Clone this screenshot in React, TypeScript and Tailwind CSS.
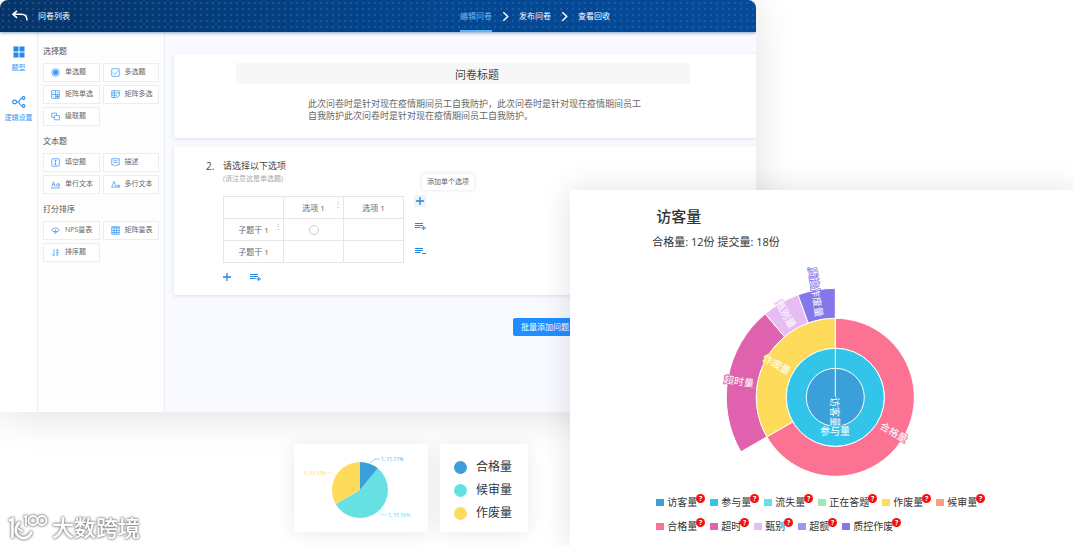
import { ReactNode } from "react";

const questionGroups = [
  {
    title: "选择题",
    items: [
      { icon: "radio", label: "单选题" },
      { icon: "check", label: "多选题" },
      { icon: "matrixRadio", label: "矩阵单选" },
      { icon: "matrixCheck", label: "矩阵多选" },
      { icon: "cascade", label: "级联题" },
    ],
  },
  {
    title: "文本题",
    items: [
      { icon: "blank", label: "填空题" },
      { icon: "describe", label: "描述" },
      { icon: "singleLine", label: "单行文本" },
      { icon: "multiLine", label: "多行文本" },
    ],
  },
  {
    title: "打分排序",
    items: [
      { icon: "nps", label: "NPS量表" },
      { icon: "matrixScale", label: "矩阵量表" },
      { icon: "sort", label: "排序题" },
    ],
  },
];

const legendRows = [
  [
    { label: "访客量", color: "#3ba0d9" },
    { label: "参与量", color: "#32c5e9" },
    { label: "流失量", color: "#67e0e3" },
    { label: "正在答题", color: "#9fe6b8" },
    { label: "作废量", color: "#ffdb5c" },
    { label: "候审量", color: "#ff9f7f" },
  ],
  [
    { label: "合格量", color: "#fb7293" },
    { label: "超时", color: "#e062ae" },
    { label: "甄别", color: "#e7bcf3" },
    { label: "超额", color: "#9d96f5" },
    { label: "质控作废", color: "#8378ea" },
  ],
];

const pieLegend = [
  { label: "合格量", color: "#3ba0d9" },
  { label: "候审量", color: "#67e0e3" },
  { label: "作废量", color: "#ffdb5c" },
];

const sunburst = [
  { color: "#e062ae", inner: 79, outer: 109, from: 240, to: 320 },
  { color: "#e7bcf3", inner: 79, outer: 109, from: 320, to: 340 },
  { color: "#8378ea", inner: 79, outer: 109, from: 340, to: 360 },
  { color: "#fb7293", inner: 49, outer: 79, from: 0, to: 240 },
  { color: "#ffdb5c", inner: 49, outer: 79, from: 240, to: 360 },
];

const sunburstLabels = [
  { text: "超时量", x: 39, y: 126, rotate: 8, color: "#e062ae" },
  { text: "甄别量", x: 86, y: 59, rotate: 60, color: "#e7bcf3" },
  { text: "质控作废量", x: 116, y: 37, rotate: 82, color: "#8378ea" },
  { text: "作废量", x: 77, y: 109, rotate: 30, color: "#ffdb5c" },
  { text: "合格量", x: 194, y: 177, rotate: 30, color: "#fb7293" },
  { text: "访客量", x: 135, y: 157, rotate: 90, color: "#3ba0d9" },
  { text: "参与量", x: 135, y: 176, rotate: 0, color: "#32c5e9" },
];

// angles run clockwise from twelve o'clock
function point(cx: number, cy: number, r: number, deg: number) {
  const a = (deg * Math.PI) / 180;
  return `${cx + r * Math.sin(a)} ${cy - r * Math.cos(a)}`;
}

function sector(
  cx: number,
  cy: number,
  inner: number,
  outer: number,
  from: number,
  to: number
) {
  const large = to - from > 180 ? 1 : 0;
  return `M${point(cx, cy, outer, from)}A${outer} ${outer} 0 ${large} 1 ${point(cx, cy, outer, to)}L${point(cx, cy, inner, to)}A${inner} ${inner} 0 ${large} 0 ${point(cx, cy, inner, from)}Z`;
}

const iconShapes: Record<string, ReactNode> = {
  radio: (
    <>
      <circle cx="6" cy="6" r="5" />
      <circle cx="6" cy="6" r="3" fill="currentColor" />
    </>
  ),
  check: (
    <>
      <rect x="1" y="1" width="10" height="10" rx="0.5" />
      <path d="M3 6l2.2 2.4L9.6 3.4" />
    </>
  ),
  matrixRadio: (
    <>
      <rect x="1" y="1" width="10" height="10" />
      <path d="M1 6h10M6 1v10M3 3.5h1M8 3.5h1.4M3 8.5h1" />
      <circle cx="8.6" cy="8.6" r="1.2" fill="currentColor" />
    </>
  ),
  matrixCheck: (
    <>
      <path d="M1 1h10v7M1 1v9h6M1 4h10M1 7h7M4.5 1v9" />
      <path d="M7 8.6l1.4 1.4L11 7.6" />
    </>
  ),
  cascade: (
    <>
      <path d="M4 7H1V1.5h6.5V4" />
      <rect x="4.5" y="4.8" width="6.8" height="5.6" rx="0.5" />
    </>
  ),
  blank: (
    <>
      <rect x="1" y="1" width="10" height="10" rx="1" />
      <path d="M4.5 3.2h3M6 3.2v5.6M4.5 8.8h3" />
    </>
  ),
  describe: (
    <>
      <path d="M1 1h10v8H8L6 11 4 9H1z" />
      <path d="M3.4 3.6h5.2M3.4 6h5.2" />
    </>
  ),
  singleLine: (
    <path d="M0 10.5h12M1 8.5l2.4-6 2.4 6M1.8 6.4h3.2M11 4.6v4M11 6.6a1.8 1.8 0 1 0-3.6 0a1.8 1.8 0 1 0 3.6 0" />
  ),
  multiLine: (
    <path d="M0.8 9.5L4 2l3.2 7.5zM11 6.5v3.5M11 8.3a1.5 1.5 0 1 0-3 0a1.5 1.5 0 1 0 3 0" />
  ),
  nps: (
    <>
      <path d="M1 5.6C2 1.8 10 1.8 11 5.6L9 7.4H3z" />
      <path d="M4.5 7.4L6 10.2 7.5 7.4M6 7V4.8" />
    </>
  ),
  matrixScale: (
    <path d="M1 1h10v10H1zM1 2.600h10M1 6h10M1 8.6h10M4.3 1v10M7.7 1v10" />
  ),
  sort: <path d="M4 1.5v9L1.5 8M8 10.5v-9L10.5 4M8 6h2.5M8 9h2" />,
};

function TypeIcon({ name }: { name: string }) {
  return (
    <svg
      viewBox="0 0 12 12"
      className="size-[9px] shrink-0 text-[#3d97f2]"
      fill="none"
      stroke="currentColor"
      strokeWidth="1"
      aria-hidden="true"
    >
      {iconShapes[name]}
    </svg>
  );
}

function PlusIcon() {
  return (
    <svg viewBox="0 0 12 12" className="size-3" aria-hidden="true">
      <path d="M6 2v8M2 6h8" stroke="#2185e0" strokeWidth="1.3" />
    </svg>
  );
}

function ListIcon({ minus = false }: { minus?: boolean }) {
  return (
    <svg viewBox="0 0 12 12" className="size-3" aria-hidden="true">
      <path d="M1 3.500h8M1 5.500h8M1 7.500h5.500" stroke="#2185e0" strokeWidth="1.2" />
      <path
        d={minus ? "M8 8.500h4" : "M7.500 8h4.500M9.700 6v4"}
        stroke="#2185e0"
        strokeWidth="1"
      />
    </svg>
  );
}

function Chevron() {
  return (
    <svg
      viewBox="0 0 5 9"
      className="h-[9px] w-[5px] overflow-visible"
      fill="none"
      stroke="#fff"
      strokeWidth="1.5"
      aria-hidden="true"
    >
      <path d="M0.3 0.3L4.700 4.500 0.3 8.700" />
    </svg>
  );
}

function EditorHeader() {
  return (
    <header className="relative z-10 flex h-8 items-center bg-[radial-gradient(circle,#3f7fc259_1px,transparent_1px),linear-gradient(90deg,#063468,#044791_60%,#054b99)] bg-[size:6px_6px,100%_100%] text-[8px] text-white shadow-[0_1px_3px_#0b4a8f80]">
      <a href="#list" className="ml-3 flex items-center gap-[10px]">
        <svg
          viewBox="0 0 16 12"
          className="h-3 w-4"
          fill="none"
          stroke="currentColor"
          strokeWidth="1.6"
          aria-hidden="true"
        >
          <path d="M5 0.8L1 4.3l4 3.500M1 4.300h8.500c3.500 0 5.500 2.200 5.500 6" />
        </svg>
        问卷列表
      </a>
      <nav className="mr-[146px] ml-auto flex h-full items-center gap-[11px]">
        <a
          href="#edit"
          className="flex h-full items-center border-y-2 border-t-transparent border-b-[#5db1f5] text-[#6cbcf7]"
        >
          编辑问卷
        </a>
        <Chevron />
        <a href="#publish">发布问卷</a>
        <Chevron />
        <a href="#collect">查看回收</a>
      </nav>
    </header>
  );
}

function Rail() {
  return (
    <div className="flex w-[38px] shrink-0 flex-col items-center gap-[23px] border-r border-[#ebeef4] pt-[14px] text-[7px] leading-[10px] text-[#3d97f2]">
      <button className="flex flex-col items-center gap-[5px]">
        <svg
          viewBox="0 0 12 12"
          className="size-3"
          fill="#2389ec"
          aria-hidden="true"
        >
          <path d="M0.5 0.5h5v5h-5zM6.5 0.5h5v5h-5zM0.5 6.5h5v5h-5zM6.5 6.5h5v5h-5z" />
        </svg>
        题型
      </button>
      <button className="flex flex-col items-center gap-[5px]">
        <svg
          viewBox="0 0 14 12"
          className="h-3 w-[14px]"
          fill="none"
          stroke="#2389ec"
          strokeWidth="1.1"
          aria-hidden="true"
        >
          <circle cx="2.6" cy="6" r="1.9" />
          <circle cx="11.5" cy="2" r="1.4" />
          <circle cx="11.5" cy="10" r="1.4" />
          <path d="M4.5 6h2.3M10 2.3C8 2.5 7.8 4 6.8 6c1 2 1.2 3.5 3.2 3.700" />
        </svg>
        逻辑设置
      </button>
    </div>
  );
}

function TypePanel() {
  return (
    <aside className="flex w-[127px] shrink-0 flex-col gap-[9px] border-r border-[#ebeef4] bg-[#fdfdfe] px-[5px] pt-[13px]">
      {questionGroups.map((group) => (
        <section key={group.title}>
          <h2 className="mb-[6px] text-[8px] leading-3 text-[#555]">
            {group.title}
          </h2>
          <div className="grid grid-cols-2 gap-[3px]">
            {group.items.map((item) => (
              <button
                key={item.label}
                className="flex h-[19px] items-center gap-[5px] border border-[#ebedf0] bg-white pl-[7px] text-[7px] whitespace-nowrap text-[#666]"
              >
                <TypeIcon name={item.icon} />
                {item.label}
              </button>
            ))}
          </div>
        </section>
      ))}
    </aside>
  );
}

function CellDots() {
  return (
    <span className="absolute top-[2px] right-px text-[8px] leading-[9px] text-[#aaa]">
      ⋮
    </span>
  );
}

function MatrixTable() {
  return (
    <table className="table-fixed border-collapse text-center text-[8px] text-[#666] [&_td]:border [&_td]:border-[#e6e6e6] [&_th]:border [&_th]:border-[#e6e6e6] [&_th]:font-normal">
      <tbody>
        <tr className="h-[22px]">
          <td className="w-[60px]" />
          <th className="relative w-[60px]">
            选项 1<CellDots />
          </th>
          <th className="w-[60px]">选项 1</th>
        </tr>
        <tr className="h-[22px]">
          <th className="relative">
            子题干 1<CellDots />
          </th>
          <td>
            <input
              type="radio"
              name="row1"
              aria-label="子题干 1"
              className="mx-auto block size-[10px] appearance-none rounded-full border border-[#ccc]"
            />
          </td>
          <td />
        </tr>
        <tr className="h-[22px]">
          <th>子题干 1</th>
          <td />
          <td />
        </tr>
      </tbody>
    </table>
  );
}

function EditorMain() {
  return (
    <main className="min-w-0 flex-1 bg-[#f8faff] pt-[22px] pb-[76px] pl-[9px]">
      <section className="rounded-l-xs bg-white pt-[9px] pr-[66px] pb-4 pl-[62px] shadow-[0_1px_4px_#5f78a033]">
        <input
          aria-label="问卷标题"
          defaultValue="问卷标题"
          className="block h-[21px] w-full bg-[#f7f7f7] pl-7 text-center text-[11px] text-[#444]"
        />
        <p className="mt-[14px] ml-[72px] w-[336px] text-[9px] leading-3 text-[#666]">
          此次问卷时是针对现在疫情期间员工自我防护，此次问卷时是针对现在疫情期间员工自我防护此次问卷时是针对现在疫情期间员工自我防护。
        </p>
      </section>

      <section className="mt-2 flex rounded-l-xs bg-white pt-[13px] pb-3 pl-8 text-[#444] shadow-[0_1px_4px_#5f78a033]">
        <span className="w-[17px] text-[10px] leading-[14px]">2.</span>
        <div>
          <h3 className="text-[9px] leading-[14px]">请选择以下选项</h3>
          <p className="mt-px text-[7px] leading-[10px] text-[#aaa]">
            (请注意这是单选题)
          </p>
          <div className="mt-3 flex gap-[10px]">
            <MatrixTable />
            <div className="relative -mt-px flex flex-col gap-[13px]">
              <span className="absolute bottom-full left-2 mb-[5px] rounded-xs bg-white px-[5px] text-[7px] leading-4 whitespace-nowrap text-[#666] shadow-[0_0_4px_#0000001f]">
                添加单个选项
              </span>
              <button aria-label="添加单个选项" className="bg-[#eff3f8]">
                <PlusIcon />
              </button>
              <button aria-label="批量添加选项">
                <ListIcon />
              </button>
              <button aria-label="删除选项">
                <ListIcon minus />
              </button>
            </div>
          </div>
          <div className="mt-2 -ml-0.5 flex gap-4">
            <button aria-label="添加子题干">
              <PlusIcon />
            </button>
            <button aria-label="批量添加子题干">
              <ListIcon />
            </button>
          </div>
        </div>
      </section>

      <button className="mt-[23px] ml-[339px] block h-[18px] rounded-xs bg-[#1f8fff] px-2 text-[8px] whitespace-nowrap text-white">
        批量添加问题
      </button>
    </main>
  );
}

function PieCard() {
  return (
    <div className="rounded bg-white shadow-[0_2px_20px_#00000017]">
      <svg
        viewBox="0 0 134 88"
        className="h-[88px] w-[134px]"
        fontSize="5"
        role="img"
        aria-label="合格量"
      >
        <path d={sector(66, 46, 0, 28, 0, 40)} fill="#3ba0d9" />
        <path d={sector(66, 46, 0, 28, 40, 240)} fill="#67e0e3" />
        <path d={sector(66, 46, 0, 28, 240, 360)} fill="#ffdb5c" />
        <g fill="none" strokeWidth="0.5">
          <path d="M76 19l5-4h5" stroke="#3ba0d9" />
          <path d="M84 68l4 3h5" stroke="#67e0e3" />
          <path d="M41 31l-4-2h-4" stroke="#ffdb5c" />
        </g>
        <text x="87" y="17" fill="#3ba0d9">
          1, 11.11%
        </text>
        <text x="94" y="73" fill="#67e0e3">
          5, 55.56%
        </text>
        <text x="32" y="31" textAnchor="end" fill="#ffdb5c">
          3, 33.33%
        </text>
      </svg>
    </div>
  );
}

function PieLegend() {
  return (
    <ul className="flex flex-col justify-center gap-[7px] rounded bg-white pt-1 pr-4 pl-[14px] text-[12px] leading-4 text-[#333] shadow-[0_2px_20px_#00000017]">
      {pieLegend.map((item) => (
        <li key={item.label} className="flex items-center gap-[9px]">
          <span
            className="size-[13px] rounded-full"
            style={{ backgroundColor: item.color }}
          />
          {item.label}
        </li>
      ))}
    </ul>
  );
}

function Sunburst() {
  return (
    <svg
      viewBox="0 0 240 230"
      className="mt-[5px] ml-[130px] h-[230px] w-[240px]"
      role="img"
      aria-label="访客量"
    >
      <g stroke="#fff" strokeWidth="1">
        {sunburst.map((s) => (
          <path
            key={s.color}
            d={sector(135.3, 142.3, s.inner, s.outer, s.from, s.to)}
            fill={s.color}
          />
        ))}
        <circle cx="135.3" cy="142.3" r="49" fill="#32c5e9" />
        <circle cx="135.3" cy="142.3" r="29" fill="#3ba0d9" />
        <path d="M135.3 142.3V63" />
      </g>
      {sunburstLabels.map((label) => (
        <text
          key={label.text}
          transform={`translate(${label.x} ${label.y}) rotate(${label.rotate})`}
          y="4"
          textAnchor="middle"
          fontSize="10"
          fill="#fff"
          stroke={label.color}
          strokeWidth="1.5"
          paintOrder="stroke"
        >
          {label.text}
        </text>
      ))}
    </svg>
  );
}

function VisitorCard() {
  return (
    <section className="absolute top-[190px] right-0 bottom-0 left-[53.1%] z-20 rounded-tl bg-white pt-4 text-[#333] shadow-[0_0_32px_#0000001f]">
      <h2 className="ml-[86px] text-[15px] leading-5 font-medium">访客量</h2>
      <p className="mt-2 ml-[82px] text-[11px] leading-4">
        合格量: 12份 提交量: 18份
      </p>
      <Sunburst />
      <div className="mt-[10px] ml-[86px] flex flex-col gap-[10px] text-[10px] leading-[14px]">
        {legendRows.map((row, i) => (
          <ul key={i} className="flex gap-[5px]">
            {row.map((item) => (
              <li key={item.label} className="flex items-center">
                <span
                  className="mr-[3px] h-[7px] w-2"
                  style={{ backgroundColor: item.color }}
                />
                {item.label}
                <sup className="top-0 -mt-px -ml-px size-[9px] self-start rounded-full bg-[#f50f0f] text-center text-[7px] leading-[9px] font-bold text-white">
                  ?
                </sup>
              </li>
            ))}
          </ul>
        ))}
      </div>
    </section>
  );
}

function Watermark() {
  return (
    <div className="absolute bottom-[5px] left-2 flex items-center gap-1 text-[22px] leading-7 font-medium text-white [filter:drop-shadow(0_0_1px_#888)_drop-shadow(0_0_1px_#999)]">
      <svg
        viewBox="0 0 40 28"
        className="h-7 w-10"
        fill="none"
        stroke="#fff"
        strokeWidth="2.6"
        aria-hidden="true"
      >
        <path d="M1 7.500l3.500-1.500v19" />
        <path d="M12 9c-5 4-6 11-1 14.500s11 1 12.500-5" />
        <path d="M10 15.500l5 3" strokeWidth="2" />
        <g strokeWidth="1.8">
          <path d="M15.500 4l2.500-1v10" />
          <circle cx="25" cy="7.500" r="4.500" />
          <circle cx="34" cy="7.500" r="4.500" />
        </g>
      </svg>
      大数跨境
    </div>
  );
}

function App() {
  return (
    <div className="relative min-h-screen overflow-hidden bg-white pb-[14px] font-['Open_Sans','Noto_Sans_CJK_SC',sans-serif]">
      <div className="w-[70.4%] min-w-[640px] overflow-hidden rounded-t-lg bg-white shadow-[0_4px_40px_#0000001f]">
        <EditorHeader />
        <div className="flex">
          <Rail />
          <TypePanel />
          <EditorMain />
        </div>
      </div>

      <div className="mt-8 ml-[294px] flex gap-3">
        <PieCard />
        <PieLegend />
      </div>

      <VisitorCard />
      <Watermark />
    </div>
  );
}

export default App;
